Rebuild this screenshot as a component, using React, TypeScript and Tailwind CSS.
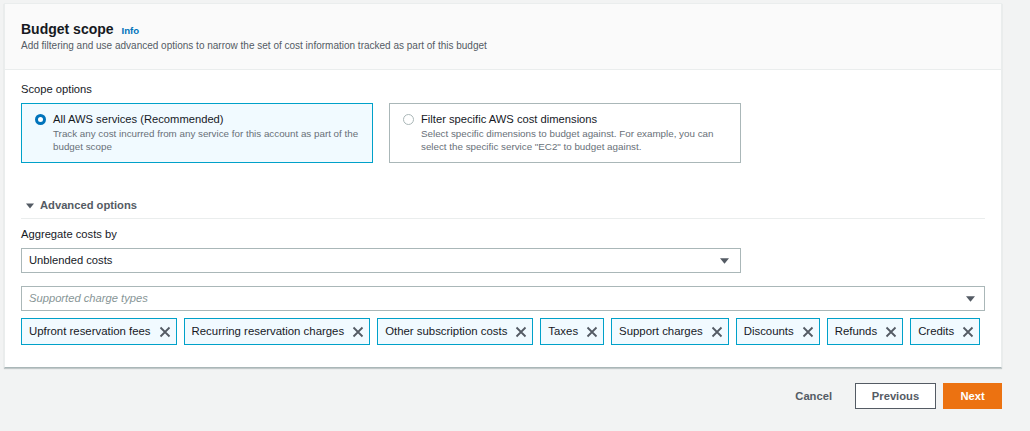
import React from 'react'

const font = { fontFamily: '"Liberation Sans", Arial, sans-serif' }

const chargeTypes = [
  'Upfront reservation fees',
  'Recurring reservation charges',
  'Other subscription costs',
  'Taxes',
  'Support charges',
  'Discounts',
  'Refunds',
  'Credits',
]

const Caret = ({ className }: { className?: string }) => (
  <svg viewBox="0 0 10 6" className={className} aria-hidden="true">
    <path d="M0 0h10L5 6z" fill="currentColor" />
  </svg>
)

const XIcon = () => (
  <svg viewBox="0 0 12 12" className="w-[12px] h-[12px] shrink-0 text-[#545b64]" aria-hidden="true">
    <path d="M1.5 1.5l9 9M10.5 1.5l-9 9" stroke="currentColor" strokeWidth="1.8" fill="none" />
  </svg>
)

const Token = ({ label }: { label: string }) => (
  <div className="flex shrink-0 items-center h-[27px] pl-[7px] pr-[5px] gap-[8px] border border-[#00a1c9] bg-[#f1faff] text-[11.4px] text-[#16191f] whitespace-nowrap">
    <span>{label}</span>
    <XIcon />
  </div>
)

export default function App() {
  return (
    <div className="w-full h-[431px] bg-[#f2f3f3] pt-[3px] pl-[4px]" style={font}>
      <div className="w-[998px] bg-white border border-[#eaeded] border-b-[#aab7b8] shadow-[0_1px_1px_rgba(0,28,36,0.2)]">
        <div className="h-[66px] bg-[#fafafa] border-b border-[#eaeded] px-[16px] pt-[16px]">
          <div className="flex items-baseline gap-[8px]">
            <h2 className="text-[14px] font-bold text-[#16191f] leading-[18px]">Budget scope</h2>
            <span className="text-[9.6px] font-bold text-[#0073bb]">Info</span>
          </div>
          <p className="text-[10px] text-[#545b64] leading-[14px] mt-[1px]">
            Add filtering and use advanced options to narrow the set of cost information tracked as part of this budget
          </p>
        </div>

        <div className="px-[16px] pt-[12px] pb-[22px]">
          <div className="text-[11.2px] text-[#16191f] leading-[15px]">Scope options</div>
          <div className="flex gap-[16px] mt-[6px]">
            <div className="w-[352px] h-[60px] border border-[#00a1c9] bg-[#f1faff] pl-[13px] pt-[8px] flex gap-[7px]">
              <span className="mt-[2px] w-[11px] h-[11px] rounded-full border-[3.5px] border-[#0073bb] bg-white shrink-0" />
              <div>
                <div className="text-[11.2px] text-[#16191f] leading-[15px]">All AWS services (Recommended)</div>
                <div className="text-[9.8px] text-[#687078] leading-[13px] w-[310px]">
                  Track any cost incurred from any service for this account as part of the budget scope
                </div>
              </div>
            </div>
            <div className="w-[352px] h-[60px] border border-[#aab7b8] bg-white pl-[13px] pt-[8px] flex gap-[7px]">
              <span className="mt-[2px] w-[11px] h-[11px] rounded-full border border-[#aab7b8] bg-white shrink-0" />
              <div>
                <div className="text-[11.2px] text-[#16191f] leading-[15px]">Filter specific AWS cost dimensions</div>
                <div className="text-[9.8px] text-[#687078] leading-[13px] w-[300px]">
                  Select specific dimensions to budget against. For example, you can select the specific service "EC2" to budget against.
                </div>
              </div>
            </div>
          </div>

          <div className="mt-[35px] border-b border-[#eaeded] pb-[5px] flex items-center gap-[6px] pl-[5px]">
            <Caret className="w-[8px] h-[6px] text-[#545b64]" />
            <span className="text-[11.2px] font-bold text-[#545b64] leading-[15px]">Advanced options</span>
          </div>

          <div className="text-[11.2px] text-[#16191f] leading-[15px] mt-[8px]">Aggregate costs by</div>
          <div className="mt-[6px] w-[720px] h-[25px] border border-[#aab7b8] flex items-center justify-between pl-[7px] pr-[11px]">
            <span className="text-[11.2px] text-[#16191f]">Unblended costs</span>
            <Caret className="w-[9px] h-[6px] text-[#545b64]" />
          </div>

          <div className="mt-[13px] h-[25px] border border-[#aab7b8] flex items-center justify-between pl-[7px] pr-[9px]">
            <span className="text-[11.2px] italic text-[#879596]">Supported charge types</span>
            <Caret className="w-[9px] h-[6px] text-[#545b64]" />
          </div>

          <div className="mt-[7px] flex gap-[7px]">
            {chargeTypes.map((t) => (
              <Token key={t} label={t} />
            ))}
          </div>
        </div>
      </div>

      <div className="w-[998px] flex justify-end items-center gap-[7px] mt-[15px]">
        <button className="h-[26px] px-[16px] text-[11.2px] font-bold text-[#545b64]">Cancel</button>
        <button className="h-[26px] w-[81px] border border-[#545b64] bg-white text-[11.2px] font-bold text-[#545b64]">Previous</button>
        <button className="h-[26px] w-[59px] bg-[#ec7211] text-[11.2px] font-bold text-white">Next</button>
      </div>
    </div>
  )
}
